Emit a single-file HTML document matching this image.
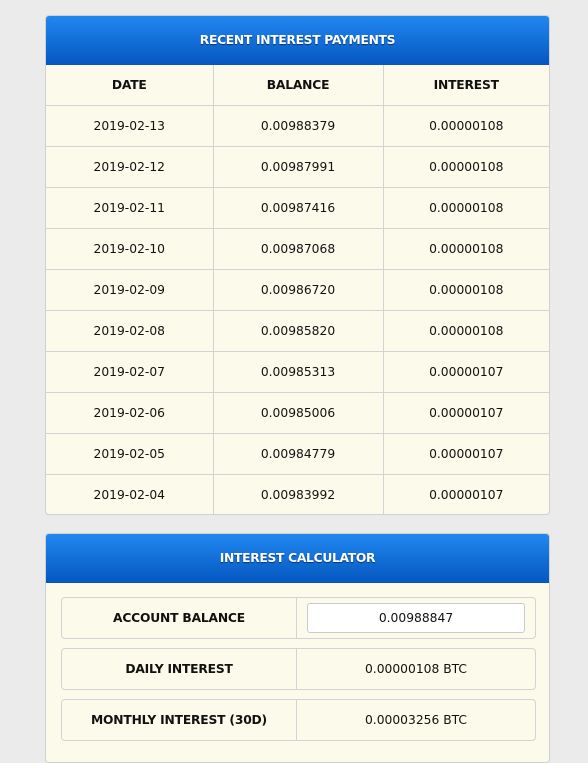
<!DOCTYPE html>
<html><head><style>
*{box-sizing:border-box;margin:0;padding:0}
body{width:588px;height:746px;background:#ebebeb;font-family:"DejaVu Sans","Liberation Sans",sans-serif;overflow:hidden;position:relative;color:#111}
.panel{position:absolute;left:45px;width:505px;background:#fcfbeb;border:1px solid #d0d0d0;border-radius:4px;overflow:hidden}
.hd{height:49px;background:linear-gradient(#2188f0,#0556c0);color:#fff;font-weight:bold;font-size:12.3px;text-align:center;line-height:48px;text-shadow:0 1px 1px rgba(0,0,0,.5);letter-spacing:-0.3px}
table{border-collapse:collapse;width:100%;font-size:12.3px}
td,th{text-align:center;border-right:1px solid #d3d3d3;border-bottom:1px solid #d3d3d3;height:41px;padding:0}
th{height:40px;font-size:12.3px;letter-spacing:-0.2px}
td:last-child,th:last-child{border-right:none}
tr:last-child td{border-bottom:none}
.row{position:absolute;left:15px;width:475px;height:42px;border:1px solid #d3d3d3;border-radius:4px;display:flex;font-size:12.3px}
.row .l{width:235px;border-right:1px solid #d3d3d3;display:flex;align-items:center;justify-content:center;font-weight:bold;letter-spacing:-0.2px}
.row .r{flex:1;display:flex;align-items:center;justify-content:center}
.inp{width:218px;height:30px;background:#fff;border:1px solid #ccc;border-radius:3px;display:flex;align-items:center;justify-content:center}
</style></head><body>
<div class="panel" style="top:15px;height:500px">
<div class="hd">RECENT INTEREST PAYMENTS</div>
<table>
<colgroup><col style="width:167px"><col style="width:170px"><col></colgroup>
<tr><th>DATE</th><th>BALANCE</th><th>INTEREST</th></tr>
<tr><td>2019-02-13</td><td>0.00988379</td><td>0.00000108</td></tr>
<tr><td>2019-02-12</td><td>0.00987991</td><td>0.00000108</td></tr>
<tr><td>2019-02-11</td><td>0.00987416</td><td>0.00000108</td></tr>
<tr><td>2019-02-10</td><td>0.00987068</td><td>0.00000108</td></tr>
<tr><td>2019-02-09</td><td>0.00986720</td><td>0.00000108</td></tr>
<tr><td>2019-02-08</td><td>0.00985820</td><td>0.00000108</td></tr>
<tr><td>2019-02-07</td><td>0.00985313</td><td>0.00000107</td></tr>
<tr><td>2019-02-06</td><td>0.00985006</td><td>0.00000107</td></tr>
<tr><td>2019-02-05</td><td>0.00984779</td><td>0.00000107</td></tr>
<tr><td>2019-02-04</td><td>0.00983992</td><td>0.00000107</td></tr>
</table>
</div>
<div class="panel" style="top:533px;height:230px">
<div class="hd">INTEREST CALCULATOR</div>
<div class="row" style="top:63px"><div class="l">ACCOUNT BALANCE</div><div class="r"><div class="inp">0.00988847</div></div></div>
<div class="row" style="top:114px"><div class="l">DAILY INTEREST</div><div class="r">0.00000108 BTC</div></div>
<div class="row" style="top:165px"><div class="l">MONTHLY INTEREST (30D)</div><div class="r">0.00003256 BTC</div></div>
</div>
</body></html>
